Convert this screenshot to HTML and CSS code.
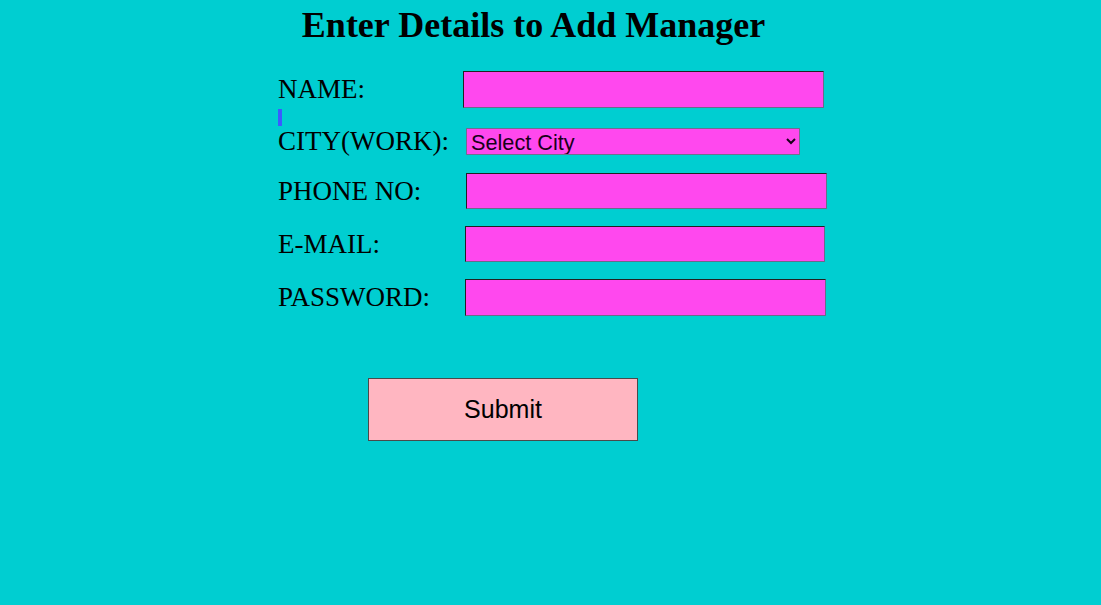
FILE: index.html
```html
<!DOCTYPE html>
<html>
<head>
<meta charset="utf-8">
<title>Add Manager</title>
<link rel="stylesheet" href="styles.css">
</head>
<body>
<div class="page">
  <h1 class="title">Enter Details to Add Manager</h1>
  <form class="form">
    <div class="row">
      <label class="label">NAME:</label>
      <input class="field" type="text">
    </div>
    <div class="marker"></div>
    <div class="row row-city">
      <label class="label">CITY(WORK):</label>
      <select class="select">
        <option>Select City</option>
      </select>
    </div>
    <div class="row row-gap row-phone">
      <label class="label">PHONE NO:</label>
      <input class="field field-phone" type="text">
    </div>
    <div class="row row-gap">
      <label class="label">E-MAIL:</label>
      <input class="field field-mail" type="text">
    </div>
    <div class="row row-gap">
      <label class="label">PASSWORD:</label>
      <input class="field field-pass" type="password">
    </div>
    <div class="actions">
      <button class="submit" type="button">Submit</button>
    </div>
  </form>
</div>
</body>
</html>
```
FILE: styles.css
```css
html, body {
  margin: 0;
  padding: 0;
  background: #00ced1;
}
body {
  font-family: "Liberation Serif", "Times New Roman", serif;
  color: #000;
  height: 605px;
}
.page {
  width: 560px;
  margin: 0 0 0 278px;
}
.title {
  margin: 0;
  padding: 5px 0 0 0;
  width: 511px;
  font-size: 36px;
  font-weight: bold;
  line-height: 41px;
  text-align: center;
}
.form {
  margin-top: 25px;
  display: flex;
  flex-direction: column;
}
.row {
  display: flex;
  align-items: center;
}
.label {
  width: 185px;
  flex: none;
  font-size: 27px;
  line-height: 26px;
  padding-bottom: 1px;
}
.field {
  box-sizing: border-box;
  width: 361px;
  height: 37px;
  margin: 0;
  padding: 0 4px;
  background: #ff48ee;
  border: 1px solid;
  border-color: #222 #6a6a8a #6a6a8a #222;
  font-size: 18px;
  flex: none;
}
.field-phone { margin-left: 3px; height: 36px; }
.field-mail { margin-left: 2px; width: 360px; height: 36px; }
.field-pass { margin-left: 2px; height: 37px; }
.marker {
  width: 4px;
  height: 17px;
  margin-top: 1px;
  background: #3b5bff;
}
.row-city {
  margin-top: 2px;
}
.select {
  box-sizing: border-box;
  width: 334px;
  height: 27px;
  margin: 0 0 0 3px;
  padding: 0;
  background-color: #ff48ee;
  border: 1px solid #6f6f8f;
  border-radius: 0;
  font-family: "Liberation Sans", Arial, sans-serif;
  font-size: 21.7px;
  color: #1a001a;
  flex: none;
}
.row-gap {
  margin-top: 17px;
}
.row-phone {
  margin-top: 18px;
}
.actions {
  margin-top: 62px;
  padding-left: 90px;
}
.submit {
  box-sizing: border-box;
  width: 270px;
  height: 63px;
  margin: 0;
  background: #ffb6c1;
  border: 1px solid #4a4a4a;
  font-family: "Liberation Sans", Arial, sans-serif;
  font-size: 25px;
  color: #000;
}
```
